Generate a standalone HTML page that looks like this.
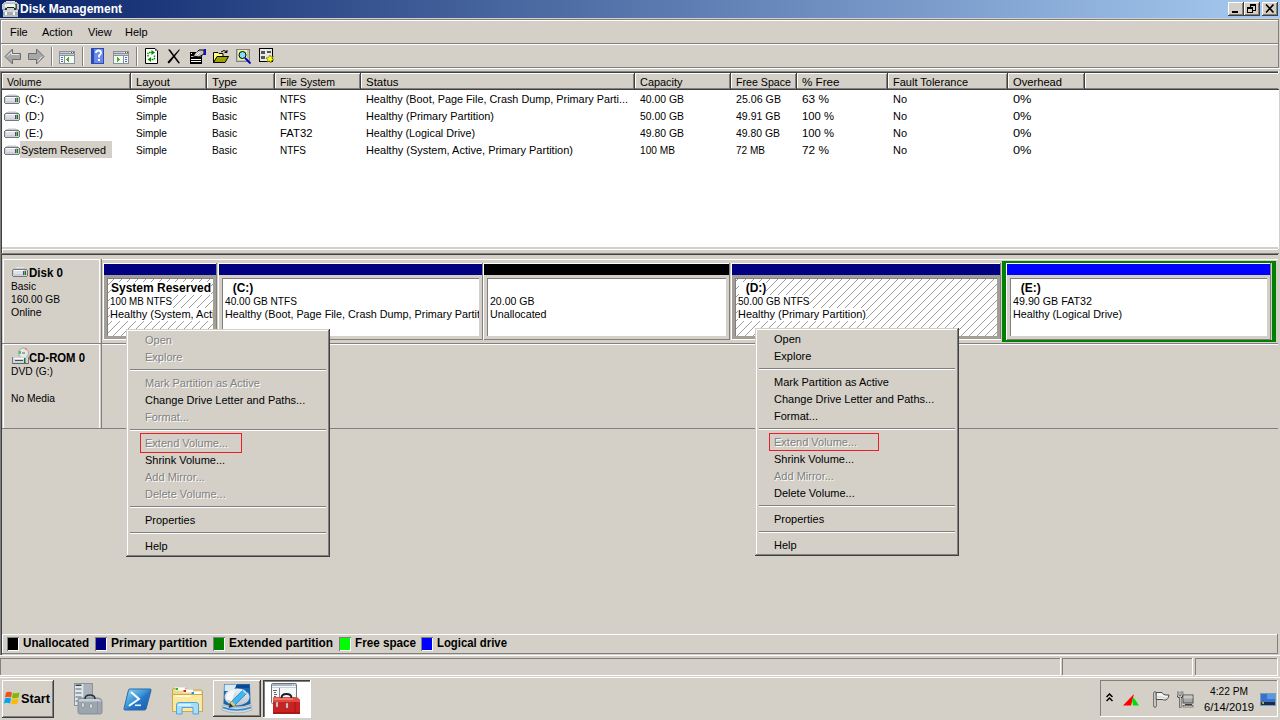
<!DOCTYPE html>
<html><head><meta charset="utf-8">
<style>
*{margin:0;padding:0;box-sizing:border-box}
html,body{width:1280px;height:720px;overflow:hidden;background:#d4d0c8;font-family:"Liberation Sans",sans-serif;font-size:11px;color:#000;position:relative}
.a{position:absolute}
.t{position:absolute;white-space:nowrap;line-height:13px;font-size:11px}
.b{font-weight:bold;font-size:12px}
.dis{color:#808080;text-shadow:1px 1px 0 #fff}
</style></head><body>
<div class="a" style="left:0px;top:0px;width:1280px;height:18px;background:linear-gradient(to right,#0a246a,#a6caf0);"></div>
<svg class="a" style="left:2px;top:1px" width="17" height="16" viewBox="0 0 17 16" shape-rendering="crispEdges">
<rect x="4" y="0" width="9" height="1" fill="#e0e2e4"/>
<rect x="2" y="1" width="13" height="2" fill="#c4c8cc"/>
<rect x="0" y="3" width="17" height="6" fill="#c8ccd0"/><rect x="1" y="2" width="15" height="1" fill="#b8bcc0"/>
<rect x="3" y="3" width="10" height="3" fill="#f0f2f6"/>
<rect x="13" y="3" width="2" height="5" fill="#504860"/><rect x="13" y="4" width="1" height="4" fill="#30e030"/>
<rect x="5" y="6" width="7" height="1" fill="#202020"/><rect x="3" y="7" width="2" height="2" fill="#303030"/><rect x="12" y="7" width="2" height="2" fill="#303030"/><rect x="0" y="8" width="3" height="1" fill="#8a8e92"/><rect x="14" y="8" width="3" height="1" fill="#8a8e92"/>
<rect x="1" y="9" width="15" height="7" fill="#a4acb0"/><rect x="1" y="9" width="15" height="2" fill="#d0d6d8"/><rect x="1" y="14" width="15" height="2" fill="#b4bcc0"/>
<rect x="3" y="11" width="2" height="3" fill="#f8f8f8"/><rect x="11" y="11" width="2" height="3" fill="#f8f8f8"/>
</svg>
<div class="t b" style="left:20px;top:3px;color:#fff">Disk Management</div>
<div class="a" style="left:1228px;top:2px;width:16px;height:14px;background:#d4d0c8;"></div>
<div class="a" style="left:1228px;top:2px;width:15px;height:1px;background:#fff;"></div>
<div class="a" style="left:1228px;top:2px;width:1px;height:13px;background:#fff;"></div>
<div class="a" style="left:1228px;top:15px;width:16px;height:1px;background:#404040;"></div>
<div class="a" style="left:1243px;top:2px;width:1px;height:14px;background:#404040;"></div>
<div class="a" style="left:1229px;top:14px;width:14px;height:1px;background:#808080;"></div>
<div class="a" style="left:1242px;top:3px;width:1px;height:12px;background:#808080;"></div>
<div class="a" style="left:1232px;top:11px;width:6px;height:2px;background:#000"></div>
<div class="a" style="left:1244px;top:2px;width:16px;height:14px;background:#d4d0c8;"></div>
<div class="a" style="left:1244px;top:2px;width:15px;height:1px;background:#fff;"></div>
<div class="a" style="left:1244px;top:2px;width:1px;height:13px;background:#fff;"></div>
<div class="a" style="left:1244px;top:15px;width:16px;height:1px;background:#404040;"></div>
<div class="a" style="left:1259px;top:2px;width:1px;height:14px;background:#404040;"></div>
<div class="a" style="left:1245px;top:14px;width:14px;height:1px;background:#808080;"></div>
<div class="a" style="left:1258px;top:3px;width:1px;height:12px;background:#808080;"></div>
<div class="a" style="left:1250px;top:4px;width:6px;height:7px;border:1px solid #000;border-top-width:2px"></div><div class="a" style="left:1247px;top:7px;width:6px;height:6px;border:1px solid #000;border-top-width:2px;background:#d4d0c8"></div>
<div class="a" style="left:1262px;top:2px;width:16px;height:14px;background:#d4d0c8;"></div>
<div class="a" style="left:1262px;top:2px;width:15px;height:1px;background:#fff;"></div>
<div class="a" style="left:1262px;top:2px;width:1px;height:13px;background:#fff;"></div>
<div class="a" style="left:1262px;top:15px;width:16px;height:1px;background:#404040;"></div>
<div class="a" style="left:1277px;top:2px;width:1px;height:14px;background:#404040;"></div>
<div class="a" style="left:1263px;top:14px;width:14px;height:1px;background:#808080;"></div>
<div class="a" style="left:1276px;top:3px;width:1px;height:12px;background:#808080;"></div>
<svg class="a" style="left:1265px;top:4px" width="10" height="9"><path d="M1 0.5L8.5 8.5M8.5 0.5L1 8.5" stroke="#000" stroke-width="1.6" fill="none"/></svg>
<div class="a" style="left:0px;top:18px;width:1280px;height:1px;background:#d4d0c8;"></div>
<div class="a" style="left:0px;top:19px;width:1279px;height:1px;background:#808080;"></div>
<div class="a" style="left:0px;top:19px;width:1px;height:25px;background:#808080;"></div>
<div class="a" style="left:1px;top:20px;width:1277px;height:1px;background:#fff;"></div>
<div class="a" style="left:1px;top:20px;width:1px;height:23px;background:#fff;"></div>
<div class="a" style="left:1278px;top:19px;width:1px;height:25px;background:#808080;"></div>
<div class="a" style="left:1px;top:43px;width:1278px;height:1px;background:#808080;"></div>
<div class="t " style="left:10px;top:26px;">File</div>
<div class="t " style="left:42px;top:26px;">Action</div>
<div class="t " style="left:88px;top:26px;">View</div>
<div class="t " style="left:125px;top:26px;">Help</div>
<div class="a" style="left:1px;top:44px;width:1277px;height:1px;background:#fff;"></div>
<div class="a" style="left:0px;top:44px;width:1px;height:24px;background:#808080;"></div>
<div class="a" style="left:1px;top:45px;width:1px;height:22px;background:#fff;"></div>
<div class="a" style="left:1278px;top:44px;width:1px;height:24px;background:#808080;"></div>
<div class="a" style="left:1px;top:67px;width:1278px;height:1px;background:#808080;"></div>
<div class="a" style="left:0px;top:68px;width:1280px;height:1px;background:#fff;"></div>
<div class="a" style="left:51px;top:47px;width:1px;height:19px;background:#808080;"></div>
<div class="a" style="left:52px;top:47px;width:1px;height:19px;background:#fff;"></div>
<div class="a" style="left:82px;top:47px;width:1px;height:19px;background:#808080;"></div>
<div class="a" style="left:83px;top:47px;width:1px;height:19px;background:#fff;"></div>
<div class="a" style="left:136px;top:47px;width:1px;height:19px;background:#808080;"></div>
<div class="a" style="left:137px;top:47px;width:1px;height:19px;background:#fff;"></div>
<div id="tb"></div>
<div class="a" style="left:0px;top:71px;width:1279px;height:1px;background:#808080;"></div>
<div class="a" style="left:0px;top:71px;width:1px;height:585px;background:#808080;"></div>
<div class="a" style="left:1px;top:72px;width:1277px;height:1px;background:#404040;"></div>
<div class="a" style="left:1px;top:72px;width:1px;height:583px;background:#404040;"></div>
<div class="a" style="left:2px;top:73px;width:1276px;height:174px;background:#fff;"></div>
<div class="a" style="left:1278px;top:71px;width:1px;height:178px;background:#fff;"></div>
<div class="a" style="left:2px;top:249px;width:1276px;height:1px;background:#fff;"></div>
<div class="a" style="left:2px;top:249px;width:1px;height:4px;background:#fff;"></div>
<div class="a" style="left:2px;top:73px;width:129px;height:17px;background:#d4d0c8;"></div>
<div class="a" style="left:2px;top:73px;width:128px;height:1px;background:#fff;"></div>
<div class="a" style="left:2px;top:73px;width:1px;height:16px;background:#fff;"></div>
<div class="a" style="left:129px;top:74px;width:1px;height:15px;background:#808080;"></div>
<div class="a" style="left:130px;top:73px;width:1px;height:17px;background:#404040;"></div>
<div class="a" style="left:2px;top:88px;width:128px;height:1px;background:#808080;"></div>
<div class="a" style="left:2px;top:89px;width:129px;height:1px;background:#404040;"></div>
<div class="t " style="left:7px;top:76px;transform:scaleX(0.9400);transform-origin:0 0;">Volume</div>
<div class="a" style="left:131px;top:73px;width:76px;height:17px;background:#d4d0c8;"></div>
<div class="a" style="left:131px;top:73px;width:75px;height:1px;background:#fff;"></div>
<div class="a" style="left:131px;top:73px;width:1px;height:16px;background:#fff;"></div>
<div class="a" style="left:205px;top:74px;width:1px;height:15px;background:#808080;"></div>
<div class="a" style="left:206px;top:73px;width:1px;height:17px;background:#404040;"></div>
<div class="a" style="left:131px;top:88px;width:75px;height:1px;background:#808080;"></div>
<div class="a" style="left:131px;top:89px;width:76px;height:1px;background:#404040;"></div>
<div class="t " style="left:136px;top:76px;transform:scaleX(1.0293);transform-origin:0 0;">Layout</div>
<div class="a" style="left:207px;top:73px;width:68px;height:17px;background:#d4d0c8;"></div>
<div class="a" style="left:207px;top:73px;width:67px;height:1px;background:#fff;"></div>
<div class="a" style="left:207px;top:73px;width:1px;height:16px;background:#fff;"></div>
<div class="a" style="left:273px;top:74px;width:1px;height:15px;background:#808080;"></div>
<div class="a" style="left:274px;top:73px;width:1px;height:17px;background:#404040;"></div>
<div class="a" style="left:207px;top:88px;width:67px;height:1px;background:#808080;"></div>
<div class="a" style="left:207px;top:89px;width:68px;height:1px;background:#404040;"></div>
<div class="t " style="left:212px;top:76px;transform:scaleX(1.0478);transform-origin:0 0;">Type</div>
<div class="a" style="left:275px;top:73px;width:86px;height:17px;background:#d4d0c8;"></div>
<div class="a" style="left:275px;top:73px;width:85px;height:1px;background:#fff;"></div>
<div class="a" style="left:275px;top:73px;width:1px;height:16px;background:#fff;"></div>
<div class="a" style="left:359px;top:74px;width:1px;height:15px;background:#808080;"></div>
<div class="a" style="left:360px;top:73px;width:1px;height:17px;background:#404040;"></div>
<div class="a" style="left:275px;top:88px;width:85px;height:1px;background:#808080;"></div>
<div class="a" style="left:275px;top:89px;width:86px;height:1px;background:#404040;"></div>
<div class="t " style="left:280px;top:76px;transform:scaleX(0.9570);transform-origin:0 0;">File System</div>
<div class="a" style="left:361px;top:73px;width:274px;height:17px;background:#d4d0c8;"></div>
<div class="a" style="left:361px;top:73px;width:273px;height:1px;background:#fff;"></div>
<div class="a" style="left:361px;top:73px;width:1px;height:16px;background:#fff;"></div>
<div class="a" style="left:633px;top:74px;width:1px;height:15px;background:#808080;"></div>
<div class="a" style="left:634px;top:73px;width:1px;height:17px;background:#404040;"></div>
<div class="a" style="left:361px;top:88px;width:273px;height:1px;background:#808080;"></div>
<div class="a" style="left:361px;top:89px;width:274px;height:1px;background:#404040;"></div>
<div class="t " style="left:366px;top:76px;transform:scaleX(1.0421);transform-origin:0 0;">Status</div>
<div class="a" style="left:635px;top:73px;width:96px;height:17px;background:#d4d0c8;"></div>
<div class="a" style="left:635px;top:73px;width:95px;height:1px;background:#fff;"></div>
<div class="a" style="left:635px;top:73px;width:1px;height:16px;background:#fff;"></div>
<div class="a" style="left:729px;top:74px;width:1px;height:15px;background:#808080;"></div>
<div class="a" style="left:730px;top:73px;width:1px;height:17px;background:#404040;"></div>
<div class="a" style="left:635px;top:88px;width:95px;height:1px;background:#808080;"></div>
<div class="a" style="left:635px;top:89px;width:96px;height:1px;background:#404040;"></div>
<div class="t " style="left:640px;top:76px;transform:scaleX(0.9931);transform-origin:0 0;">Capacity</div>
<div class="a" style="left:731px;top:73px;width:66px;height:17px;background:#d4d0c8;"></div>
<div class="a" style="left:731px;top:73px;width:65px;height:1px;background:#fff;"></div>
<div class="a" style="left:731px;top:73px;width:1px;height:16px;background:#fff;"></div>
<div class="a" style="left:795px;top:74px;width:1px;height:15px;background:#808080;"></div>
<div class="a" style="left:796px;top:73px;width:1px;height:17px;background:#404040;"></div>
<div class="a" style="left:731px;top:88px;width:65px;height:1px;background:#808080;"></div>
<div class="a" style="left:731px;top:89px;width:66px;height:1px;background:#404040;"></div>
<div class="t " style="left:736px;top:76px;transform:scaleX(0.9670);transform-origin:0 0;">Free Space</div>
<div class="a" style="left:797px;top:73px;width:91px;height:17px;background:#d4d0c8;"></div>
<div class="a" style="left:797px;top:73px;width:90px;height:1px;background:#fff;"></div>
<div class="a" style="left:797px;top:73px;width:1px;height:16px;background:#fff;"></div>
<div class="a" style="left:886px;top:74px;width:1px;height:15px;background:#808080;"></div>
<div class="a" style="left:887px;top:73px;width:1px;height:17px;background:#404040;"></div>
<div class="a" style="left:797px;top:88px;width:90px;height:1px;background:#808080;"></div>
<div class="a" style="left:797px;top:89px;width:91px;height:1px;background:#404040;"></div>
<div class="t " style="left:802px;top:76px;transform:scaleX(1.0573);transform-origin:0 0;">% Free</div>
<div class="a" style="left:888px;top:73px;width:120px;height:17px;background:#d4d0c8;"></div>
<div class="a" style="left:888px;top:73px;width:119px;height:1px;background:#fff;"></div>
<div class="a" style="left:888px;top:73px;width:1px;height:16px;background:#fff;"></div>
<div class="a" style="left:1006px;top:74px;width:1px;height:15px;background:#808080;"></div>
<div class="a" style="left:1007px;top:73px;width:1px;height:17px;background:#404040;"></div>
<div class="a" style="left:888px;top:88px;width:119px;height:1px;background:#808080;"></div>
<div class="a" style="left:888px;top:89px;width:120px;height:1px;background:#404040;"></div>
<div class="t " style="left:893px;top:76px;transform:scaleX(0.9998);transform-origin:0 0;">Fault Tolerance</div>
<div class="a" style="left:1008px;top:73px;width:77px;height:17px;background:#d4d0c8;"></div>
<div class="a" style="left:1008px;top:73px;width:76px;height:1px;background:#fff;"></div>
<div class="a" style="left:1008px;top:73px;width:1px;height:16px;background:#fff;"></div>
<div class="a" style="left:1083px;top:74px;width:1px;height:15px;background:#808080;"></div>
<div class="a" style="left:1084px;top:73px;width:1px;height:17px;background:#404040;"></div>
<div class="a" style="left:1008px;top:88px;width:76px;height:1px;background:#808080;"></div>
<div class="a" style="left:1008px;top:89px;width:77px;height:1px;background:#404040;"></div>
<div class="t " style="left:1013px;top:76px;transform:scaleX(1.0142);transform-origin:0 0;">Overhead</div>
<div class="a" style="left:1085px;top:73px;width:194px;height:17px;background:#d4d0c8;"></div>
<div class="a" style="left:1085px;top:73px;width:193px;height:1px;background:#fff;"></div>
<div class="a" style="left:1085px;top:73px;width:1px;height:16px;background:#fff;"></div>
<div class="a" style="left:1085px;top:88px;width:193px;height:1px;background:#808080;"></div>
<div class="a" style="left:1085px;top:89px;width:194px;height:1px;background:#404040;"></div>
<div class="a" style="left:20px;top:141px;width:92px;height:17px;background:#d4d0c8;"></div>
<svg class="a" style="left:4px;top:94px" width="16" height="10" viewBox="0 0 16 10" shape-rendering="crispEdges"><rect x="4" y="0" width="8" height="1" fill="#e2e4e6"/><rect x="2" y="1" width="12" height="1" fill="#c4c6ca"/><rect x="0" y="3" width="16" height="6" fill="#74787e"/><rect x="1" y="2" width="14" height="8" fill="#74787e"/><rect x="1" y="3" width="14" height="6" fill="#cdd1d7"/><rect x="2" y="3" width="10" height="1" fill="#ffffff"/><rect x="2" y="4" width="9" height="3" fill="#dde2ea"/><rect x="11" y="4" width="3" height="4" fill="#5a4a6a"/><rect x="12" y="4" width="1" height="4" fill="#30e030"/></svg>
<div class="t " style="left:25px;top:93px;transform:scaleX(1.0367);transform-origin:0 0;">(C:)</div>
<div class="t " style="left:136px;top:93px;transform:scaleX(0.9219);transform-origin:0 0;">Simple</div>
<div class="t " style="left:212px;top:93px;transform:scaleX(0.9292);transform-origin:0 0;">Basic</div>
<div class="t " style="left:280px;top:93px;transform:scaleX(0.9048);transform-origin:0 0;">NTFS</div>
<div class="t " style="left:366px;top:93px;transform:scaleX(0.9852);transform-origin:0 0;">Healthy (Boot, Page File, Crash Dump, Primary Parti...</div>
<div class="t " style="left:640px;top:93px;transform:scaleX(0.9466);transform-origin:0 0;">40.00 GB</div>
<div class="t " style="left:736px;top:93px;transform:scaleX(0.9681);transform-origin:0 0;">25.06 GB</div>
<div class="t " style="left:802px;top:93px;transform:scaleX(1.0766);transform-origin:0 0;">63 %</div>
<div class="t " style="left:893px;top:93px;transform:scaleX(0.9956);transform-origin:0 0;">No</div>
<div class="t " style="left:1013px;top:93px;transform:scaleX(1.1631);transform-origin:0 0;">0%</div>
<svg class="a" style="left:4px;top:111px" width="16" height="10" viewBox="0 0 16 10" shape-rendering="crispEdges"><rect x="4" y="0" width="8" height="1" fill="#e2e4e6"/><rect x="2" y="1" width="12" height="1" fill="#c4c6ca"/><rect x="0" y="3" width="16" height="6" fill="#74787e"/><rect x="1" y="2" width="14" height="8" fill="#74787e"/><rect x="1" y="3" width="14" height="6" fill="#cdd1d7"/><rect x="2" y="3" width="10" height="1" fill="#ffffff"/><rect x="2" y="4" width="9" height="3" fill="#dde2ea"/><rect x="11" y="4" width="3" height="4" fill="#5a4a6a"/><rect x="12" y="4" width="1" height="4" fill="#30e030"/></svg>
<div class="t " style="left:25px;top:110px;transform:scaleX(1.0367);transform-origin:0 0;">(D:)</div>
<div class="t " style="left:136px;top:110px;transform:scaleX(0.9219);transform-origin:0 0;">Simple</div>
<div class="t " style="left:212px;top:110px;transform:scaleX(0.9292);transform-origin:0 0;">Basic</div>
<div class="t " style="left:280px;top:110px;transform:scaleX(0.9048);transform-origin:0 0;">NTFS</div>
<div class="t " style="left:366px;top:110px;transform:scaleX(0.9924);transform-origin:0 0;">Healthy (Primary Partition)</div>
<div class="t " style="left:640px;top:110px;transform:scaleX(0.9466);transform-origin:0 0;">50.00 GB</div>
<div class="t " style="left:736px;top:110px;transform:scaleX(0.9573);transform-origin:0 0;">49.91 GB</div>
<div class="t " style="left:802px;top:110px;transform:scaleX(1.0255);transform-origin:0 0;">100 %</div>
<div class="t " style="left:893px;top:110px;transform:scaleX(0.9956);transform-origin:0 0;">No</div>
<div class="t " style="left:1013px;top:110px;transform:scaleX(1.1631);transform-origin:0 0;">0%</div>
<svg class="a" style="left:4px;top:128px" width="16" height="10" viewBox="0 0 16 10" shape-rendering="crispEdges"><rect x="4" y="0" width="8" height="1" fill="#e2e4e6"/><rect x="2" y="1" width="12" height="1" fill="#c4c6ca"/><rect x="0" y="3" width="16" height="6" fill="#74787e"/><rect x="1" y="2" width="14" height="8" fill="#74787e"/><rect x="1" y="3" width="14" height="6" fill="#cdd1d7"/><rect x="2" y="3" width="10" height="1" fill="#ffffff"/><rect x="2" y="4" width="9" height="3" fill="#dde2ea"/><rect x="11" y="4" width="3" height="4" fill="#5a4a6a"/><rect x="12" y="4" width="1" height="4" fill="#30e030"/></svg>
<div class="t " style="left:25px;top:127px;transform:scaleX(1.0150);transform-origin:0 0;">(E:)</div>
<div class="t " style="left:136px;top:127px;transform:scaleX(0.9219);transform-origin:0 0;">Simple</div>
<div class="t " style="left:212px;top:127px;transform:scaleX(0.9292);transform-origin:0 0;">Basic</div>
<div class="t " style="left:280px;top:127px;transform:scaleX(1.0287);transform-origin:0 0;">FAT32</div>
<div class="t " style="left:366px;top:127px;transform:scaleX(0.9796);transform-origin:0 0;">Healthy (Logical Drive)</div>
<div class="t " style="left:640px;top:127px;transform:scaleX(0.9466);transform-origin:0 0;">49.80 GB</div>
<div class="t " style="left:736px;top:127px;transform:scaleX(0.9466);transform-origin:0 0;">49.80 GB</div>
<div class="t " style="left:802px;top:127px;transform:scaleX(1.0255);transform-origin:0 0;">100 %</div>
<div class="t " style="left:893px;top:127px;transform:scaleX(0.9956);transform-origin:0 0;">No</div>
<div class="t " style="left:1013px;top:127px;transform:scaleX(1.1631);transform-origin:0 0;">0%</div>
<svg class="a" style="left:4px;top:145px" width="16" height="10" viewBox="0 0 16 10" shape-rendering="crispEdges"><rect x="4" y="0" width="8" height="1" fill="#e2e4e6"/><rect x="2" y="1" width="12" height="1" fill="#c4c6ca"/><rect x="0" y="3" width="16" height="6" fill="#74787e"/><rect x="1" y="2" width="14" height="8" fill="#74787e"/><rect x="1" y="3" width="14" height="6" fill="#cdd1d7"/><rect x="2" y="3" width="10" height="1" fill="#ffffff"/><rect x="2" y="4" width="9" height="3" fill="#dde2ea"/><rect x="11" y="4" width="3" height="4" fill="#5a4a6a"/><rect x="12" y="4" width="1" height="4" fill="#30e030"/></svg>
<div class="t " style="left:21px;top:144px;transform:scaleX(0.9791);transform-origin:0 0;">System Reserved</div>
<div class="t " style="left:136px;top:144px;transform:scaleX(0.9219);transform-origin:0 0;">Simple</div>
<div class="t " style="left:212px;top:144px;transform:scaleX(0.9292);transform-origin:0 0;">Basic</div>
<div class="t " style="left:280px;top:144px;transform:scaleX(0.9048);transform-origin:0 0;">NTFS</div>
<div class="t " style="left:366px;top:144px;transform:scaleX(0.9989);transform-origin:0 0;">Healthy (System, Active, Primary Partition)</div>
<div class="t " style="left:640px;top:144px;transform:scaleX(0.9230);transform-origin:0 0;">100 MB</div>
<div class="t " style="left:736px;top:144px;transform:scaleX(0.9120);transform-origin:0 0;">72 MB</div>
<div class="t " style="left:802px;top:144px;transform:scaleX(1.0766);transform-origin:0 0;">72 %</div>
<div class="t " style="left:893px;top:144px;transform:scaleX(0.9956);transform-origin:0 0;">No</div>
<div class="t " style="left:1013px;top:144px;transform:scaleX(1.1631);transform-origin:0 0;">0%</div>
<div class="a" style="left:1px;top:253px;width:1278px;height:1px;background:#808080;"></div>
<div class="a" style="left:1px;top:254px;width:1277px;height:1px;background:#404040;"></div>
<div class="a" style="left:3px;top:259px;width:96px;height:1px;background:#fff;"></div>
<div class="a" style="left:3px;top:259px;width:1px;height:84px;background:#fff;"></div>
<div class="a" style="left:99px;top:259px;width:1px;height:84px;background:#fff;"></div>
<div class="a" style="left:101px;top:259px;width:1px;height:84px;background:#808080;"></div>
<div class="a" style="left:102px;top:259px;width:1176px;height:1px;background:#fff;"></div>
<div class="a" style="left:2px;top:343px;width:1276px;height:1px;background:#808080;"></div>
<div class="a" style="left:3px;top:344px;width:96px;height:1px;background:#fff;"></div>
<div class="a" style="left:3px;top:344px;width:1px;height:84px;background:#fff;"></div>
<div class="a" style="left:99px;top:344px;width:1px;height:84px;background:#fff;"></div>
<div class="a" style="left:101px;top:344px;width:1px;height:84px;background:#808080;"></div>
<div class="a" style="left:102px;top:344px;width:1176px;height:1px;background:#fff;"></div>
<div class="a" style="left:2px;top:428px;width:1276px;height:1px;background:#808080;"></div>
<svg class="a" style="left:12px;top:267px" width="16" height="10" viewBox="0 0 16 10" shape-rendering="crispEdges"><rect x="4" y="0" width="8" height="1" fill="#e2e4e6"/><rect x="2" y="1" width="12" height="1" fill="#c4c6ca"/><rect x="0" y="3" width="16" height="6" fill="#74787e"/><rect x="1" y="2" width="14" height="8" fill="#74787e"/><rect x="1" y="3" width="14" height="6" fill="#cdd1d7"/><rect x="2" y="3" width="10" height="1" fill="#ffffff"/><rect x="2" y="4" width="9" height="3" fill="#dde2ea"/><rect x="11" y="4" width="3" height="4" fill="#5a4a6a"/><rect x="12" y="4" width="1" height="4" fill="#30e030"/></svg>
<div class="t b" style="left:29px;top:267px;transform:scaleX(0.9616);transform-origin:0 0;">Disk 0</div>
<div class="t " style="left:11px;top:280px;transform:scaleX(0.9292);transform-origin:0 0;">Basic</div>
<div class="t " style="left:11px;top:293px;transform:scaleX(0.9317);transform-origin:0 0;">160.00 GB</div>
<div class="t " style="left:11px;top:306px;transform:scaleX(0.9592);transform-origin:0 0;">Online</div>
<svg class="a" style="left:12px;top:347px" width="17" height="18" viewBox="0 0 17 18" shape-rendering="crispEdges"><circle cx="11.5" cy="6" r="5" fill="#e4e8ea" stroke="#a0a6aa" shape-rendering="auto"/><rect x="7" y="4" width="2" height="3" fill="#40d040"/><rect x="13" y="1" width="2" height="2" fill="#ff8080"/><rect x="10" y="5" width="3" height="2" fill="#9aa"/><rect x="0" y="10" width="17" height="7" fill="#787c82"/><rect x="1" y="10" width="15" height="6" fill="#d0d4da"/><rect x="2" y="11" width="12" height="1" fill="#fff"/><rect x="3" y="13" width="8" height="1" fill="#505050"/><rect x="12" y="11" width="2" height="5" fill="#5a4a6a"/><rect x="12.5" y="11" width="1" height="5" fill="#30e030"/><rect x="1" y="16" width="15" height="1" fill="#606468"/></svg>
<div class="t b" style="left:29px;top:352px;transform:scaleX(0.9437);transform-origin:0 0;">CD-ROM 0</div>
<div class="t " style="left:11px;top:365px;transform:scaleX(0.9285);transform-origin:0 0;">DVD (G:)</div>
<div class="t " style="left:11px;top:392px;transform:scaleX(0.9346);transform-origin:0 0;">No Media</div>
<div class="a" style="left:103px;top:263px;width:113px;height:1px;background:#fff;"></div>
<div class="a" style="left:103px;top:263px;width:1px;height:77px;background:#fff;"></div>
<div class="a" style="left:104px;top:264px;width:112px;height:11px;background:#000080;"></div>
<div class="a" style="left:216px;top:263px;width:1px;height:77px;background:#808080;"></div>
<div class="a" style="left:104px;top:339px;width:113px;height:1px;background:#808080;"></div>
<div class="a" style="left:104px;top:275px;width:112px;height:64px;background:#a39f97;"></div>
<div class="a" style="left:107px;top:278px;width:106px;height:58px;background:#808080;"></div>
<div class="a" style="left:108px;top:279px;width:105px;height:57px;background:#fff;"></div>
<svg class="a" style="left:108px;top:279px" width="105" height="57" shape-rendering="crispEdges"><defs><pattern id="h104" patternUnits="userSpaceOnUse" width="8" height="8"><rect x="0" y="5" width="1" height="1" fill="#9c9c9c"/><rect x="1" y="4" width="1" height="1" fill="#9c9c9c"/><rect x="2" y="3" width="1" height="1" fill="#9c9c9c"/><rect x="3" y="2" width="1" height="1" fill="#9c9c9c"/><rect x="4" y="1" width="1" height="1" fill="#9c9c9c"/><rect x="5" y="0" width="1" height="1" fill="#9c9c9c"/><rect x="6" y="7" width="1" height="1" fill="#9c9c9c"/><rect x="7" y="6" width="1" height="1" fill="#9c9c9c"/></pattern></defs><rect width="105" height="57" fill="url(#h104)"/></svg>
<div class="a" style="left:104px;top:339px;width:113px;height:1px;background:#fff;"></div>
<div class="a" style="left:111px;top:282px;width:102px;height:13px;overflow:hidden">
<div class="t b" style="left:0px;top:0px;background:#fff">System Reserved</div>
</div>
<div class="a" style="left:110px;top:295px;width:103px;height:13px;overflow:hidden">
<div class="t " style="left:0px;top:0px;transform:scaleX(0.8897);transform-origin:0 0;background:#fff">100 MB NTFS</div>
</div>
<div class="a" style="left:110px;top:308px;width:103px;height:13px;overflow:hidden">
<div class="t " style="left:0px;top:0px;transform:scaleX(0.9989);transform-origin:0 0;background:#fff">Healthy (System, Active, Primary Partition)</div>
</div>
<div class="a" style="left:218px;top:263px;width:264px;height:1px;background:#fff;"></div>
<div class="a" style="left:218px;top:263px;width:1px;height:77px;background:#fff;"></div>
<div class="a" style="left:219px;top:264px;width:263px;height:11px;background:#000080;"></div>
<div class="a" style="left:482px;top:263px;width:1px;height:77px;background:#808080;"></div>
<div class="a" style="left:219px;top:339px;width:264px;height:1px;background:#808080;"></div>
<div class="a" style="left:219px;top:275px;width:263px;height:64px;background:#d4d0c8;"></div>
<div class="a" style="left:222px;top:278px;width:257px;height:58px;background:#808080;"></div>
<div class="a" style="left:223px;top:279px;width:256px;height:57px;background:#fff;"></div>
<div class="a" style="left:226px;top:282px;width:253px;height:13px;overflow:hidden">
<div class="t b" style="left:0px;top:0px;background:#fff">&nbsp;&nbsp;(C:)</div>
</div>
<div class="a" style="left:225px;top:295px;width:254px;height:13px;overflow:hidden">
<div class="t " style="left:0px;top:0px;transform:scaleX(0.9199);transform-origin:0 0;background:#fff">40.00 GB NTFS</div>
</div>
<div class="a" style="left:225px;top:308px;width:254px;height:13px;overflow:hidden">
<div class="t " style="left:0px;top:0px;transform:scaleX(0.9815);transform-origin:0 0;background:#fff">Healthy (Boot, Page File, Crash Dump, Primary Partition)</div>
</div>
<div class="a" style="left:483px;top:263px;width:246px;height:1px;background:#fff;"></div>
<div class="a" style="left:483px;top:263px;width:1px;height:77px;background:#fff;"></div>
<div class="a" style="left:484px;top:264px;width:245px;height:11px;background:#000000;"></div>
<div class="a" style="left:729px;top:263px;width:1px;height:77px;background:#808080;"></div>
<div class="a" style="left:484px;top:339px;width:246px;height:1px;background:#808080;"></div>
<div class="a" style="left:484px;top:275px;width:245px;height:64px;background:#d4d0c8;"></div>
<div class="a" style="left:487px;top:278px;width:239px;height:58px;background:#808080;"></div>
<div class="a" style="left:488px;top:279px;width:238px;height:57px;background:#fff;"></div>
<div class="a" style="left:490px;top:295px;width:236px;height:13px;overflow:hidden">
<div class="t " style="left:0px;top:0px;transform:scaleX(0.9573);transform-origin:0 0;background:#fff">20.00 GB</div>
</div>
<div class="a" style="left:490px;top:308px;width:236px;height:13px;overflow:hidden">
<div class="t " style="left:0px;top:0px;transform:scaleX(0.9726);transform-origin:0 0;background:#fff">Unallocated</div>
</div>
<div class="a" style="left:731px;top:263px;width:269px;height:1px;background:#fff;"></div>
<div class="a" style="left:731px;top:263px;width:1px;height:77px;background:#fff;"></div>
<div class="a" style="left:732px;top:264px;width:268px;height:11px;background:#000080;"></div>
<div class="a" style="left:1000px;top:263px;width:1px;height:77px;background:#808080;"></div>
<div class="a" style="left:732px;top:339px;width:269px;height:1px;background:#808080;"></div>
<div class="a" style="left:732px;top:275px;width:268px;height:64px;background:#a39f97;"></div>
<div class="a" style="left:735px;top:278px;width:262px;height:58px;background:#808080;"></div>
<div class="a" style="left:736px;top:279px;width:261px;height:57px;background:#fff;"></div>
<svg class="a" style="left:736px;top:279px" width="261" height="57" shape-rendering="crispEdges"><defs><pattern id="h732" patternUnits="userSpaceOnUse" width="8" height="8"><rect x="0" y="1" width="1" height="1" fill="#9c9c9c"/><rect x="1" y="0" width="1" height="1" fill="#9c9c9c"/><rect x="2" y="7" width="1" height="1" fill="#9c9c9c"/><rect x="3" y="6" width="1" height="1" fill="#9c9c9c"/><rect x="4" y="5" width="1" height="1" fill="#9c9c9c"/><rect x="5" y="4" width="1" height="1" fill="#9c9c9c"/><rect x="6" y="3" width="1" height="1" fill="#9c9c9c"/><rect x="7" y="2" width="1" height="1" fill="#9c9c9c"/></pattern></defs><rect width="261" height="57" fill="url(#h732)"/></svg>
<div class="a" style="left:732px;top:339px;width:269px;height:1px;background:#fff;"></div>
<div class="a" style="left:739px;top:282px;width:258px;height:13px;overflow:hidden">
<div class="t b" style="left:0px;top:0px;background:#fff">&nbsp;&nbsp;(D:)</div>
</div>
<div class="a" style="left:738px;top:295px;width:259px;height:13px;overflow:hidden">
<div class="t " style="left:0px;top:0px;transform:scaleX(0.9136);transform-origin:0 0;background:#fff">50.00 GB NTFS</div>
</div>
<div class="a" style="left:738px;top:308px;width:259px;height:13px;overflow:hidden">
<div class="t " style="left:0px;top:0px;transform:scaleX(0.9924);transform-origin:0 0;background:#fff">Healthy (Primary Partition)</div>
</div>
<div class="a" style="left:1002px;top:261px;width:274px;height:2px;background:#008000;"></div>
<div class="a" style="left:1002px;top:340px;width:274px;height:2px;background:#008000;"></div>
<div class="a" style="left:1002px;top:261px;width:4px;height:81px;background:#008000;"></div>
<div class="a" style="left:1272px;top:261px;width:4px;height:81px;background:#008000;"></div>
<div class="a" style="left:1006px;top:263px;width:264px;height:1px;background:#fff;"></div>
<div class="a" style="left:1006px;top:263px;width:1px;height:77px;background:#fff;"></div>
<div class="a" style="left:1007px;top:264px;width:263px;height:11px;background:#0000ff;"></div>
<div class="a" style="left:1270px;top:263px;width:1px;height:77px;background:#808080;"></div>
<div class="a" style="left:1007px;top:339px;width:264px;height:1px;background:#808080;"></div>
<div class="a" style="left:1007px;top:275px;width:263px;height:64px;background:#d4d0c8;"></div>
<div class="a" style="left:1010px;top:278px;width:257px;height:58px;background:#808080;"></div>
<div class="a" style="left:1011px;top:279px;width:256px;height:57px;background:#fff;"></div>
<div class="a" style="left:1014px;top:282px;width:253px;height:13px;overflow:hidden">
<div class="t b" style="left:0px;top:0px;background:#fff">&nbsp;&nbsp;(E:)</div>
</div>
<div class="a" style="left:1013px;top:295px;width:254px;height:13px;overflow:hidden">
<div class="t " style="left:0px;top:0px;transform:scaleX(0.9738);transform-origin:0 0;background:#fff">49.90 GB FAT32</div>
</div>
<div class="a" style="left:1013px;top:308px;width:254px;height:13px;overflow:hidden">
<div class="t " style="left:0px;top:0px;transform:scaleX(0.9796);transform-origin:0 0;background:#fff">Healthy (Logical Drive)</div>
</div>
<div class="a" style="left:2px;top:634px;width:1276px;height:1px;background:#fff;"></div>
<div class="a" style="left:2px;top:634px;width:1px;height:20px;background:#fff;"></div>
<div class="a" style="left:1277px;top:634px;width:1px;height:20px;background:#808080;"></div>
<div class="a" style="left:2px;top:653px;width:1276px;height:1px;background:#808080;"></div>
<div class="a" style="left:7px;top:637px;width:12px;height:14px;background:#808080;"></div>
<div class="a" style="left:8px;top:638px;width:11px;height:13px;background:#fff;"></div>
<div class="a" style="left:8px;top:638px;width:10px;height:12px;background:#000000;"></div>
<div class="t b" style="left:23px;top:637px;transform:scaleX(0.9704);transform-origin:0 0;">Unallocated</div>
<div class="a" style="left:95px;top:637px;width:12px;height:14px;background:#808080;"></div>
<div class="a" style="left:96px;top:638px;width:11px;height:13px;background:#fff;"></div>
<div class="a" style="left:96px;top:638px;width:10px;height:12px;background:#000080;"></div>
<div class="t b" style="left:111px;top:637px;transform:scaleX(0.9997);transform-origin:0 0;">Primary partition</div>
<div class="a" style="left:213px;top:637px;width:12px;height:14px;background:#808080;"></div>
<div class="a" style="left:214px;top:638px;width:11px;height:13px;background:#fff;"></div>
<div class="a" style="left:214px;top:638px;width:10px;height:12px;background:#008000;"></div>
<div class="t b" style="left:229px;top:637px;transform:scaleX(0.9872);transform-origin:0 0;">Extended partition</div>
<div class="a" style="left:339px;top:637px;width:12px;height:14px;background:#808080;"></div>
<div class="a" style="left:340px;top:638px;width:11px;height:13px;background:#fff;"></div>
<div class="a" style="left:340px;top:638px;width:10px;height:12px;background:#00ff00;"></div>
<div class="t b" style="left:355px;top:637px;transform:scaleX(0.9726);transform-origin:0 0;">Free space</div>
<div class="a" style="left:421px;top:637px;width:12px;height:14px;background:#808080;"></div>
<div class="a" style="left:422px;top:638px;width:11px;height:13px;background:#fff;"></div>
<div class="a" style="left:422px;top:638px;width:10px;height:12px;background:#0000ff;"></div>
<div class="t b" style="left:437px;top:637px;transform:scaleX(0.9455);transform-origin:0 0;">Logical drive</div>
<div class="a" style="left:0px;top:655px;width:1280px;height:1px;background:#fff;"></div>
<div class="a" style="left:0px;top:658px;width:1061px;height:1px;background:#808080;"></div>
<div class="a" style="left:0px;top:658px;width:1px;height:17px;background:#808080;"></div>
<div class="a" style="left:0px;top:675px;width:1061px;height:1px;background:#fff;"></div>
<div class="a" style="left:1060px;top:658px;width:1px;height:18px;background:#fff;"></div>
<div class="a" style="left:1062px;top:658px;width:131px;height:1px;background:#808080;"></div>
<div class="a" style="left:1062px;top:658px;width:1px;height:17px;background:#808080;"></div>
<div class="a" style="left:1062px;top:675px;width:131px;height:1px;background:#fff;"></div>
<div class="a" style="left:1192px;top:658px;width:1px;height:18px;background:#fff;"></div>
<div class="a" style="left:1195px;top:658px;width:83px;height:1px;background:#808080;"></div>
<div class="a" style="left:1195px;top:658px;width:1px;height:17px;background:#808080;"></div>
<div class="a" style="left:1195px;top:675px;width:83px;height:1px;background:#fff;"></div>
<div class="a" style="left:1277px;top:658px;width:1px;height:18px;background:#fff;"></div>
<div class="a" style="left:0px;top:677px;width:1280px;height:1px;background:#fff;"></div>
<div class="a" style="left:2px;top:680px;width:52px;height:38px;background:#d4d0c8;"></div>
<div class="a" style="left:2px;top:680px;width:51px;height:1px;background:#fff;"></div>
<div class="a" style="left:2px;top:680px;width:1px;height:37px;background:#fff;"></div>
<div class="a" style="left:2px;top:717px;width:52px;height:1px;background:#404040;"></div>
<div class="a" style="left:53px;top:680px;width:1px;height:38px;background:#404040;"></div>
<div class="a" style="left:3px;top:716px;width:50px;height:1px;background:#808080;"></div>
<div class="a" style="left:52px;top:681px;width:1px;height:36px;background:#808080;"></div>
<svg class="a" style="left:4px;top:690px" width="17" height="16" viewBox="0 0 17 16"><path d="M2 2.5 Q5 1 8 2.5 L7 7.5 Q4 6 1 7.5Z" fill="#f24f1c"/><path d="M9 2.8 Q12 4 15.5 2.5 L14.5 7.5 Q11 9 8 7.8Z" fill="#7fba00"/><path d="M1 8.5 Q4 7 7 8.5 L6 13.5 Q3 12 0 13.5Z" fill="#00a4ef"/><path d="M8 8.8 Q11 10 14.5 8.5 L13.5 13.5 Q10 15 7 13.8Z" fill="#ffb900"/></svg>
<div class="t b" style="left:21px;top:693px;transform:scaleX(1.0606);transform-origin:0 0;">Start</div>
<svg class="a" style="left:74px;top:683px" width="29" height="32" viewBox="0 0 29 32"><rect x="0.5" y="0.5" width="18" height="22" fill="#b8c0c8" stroke="#8a949c"/><rect x="1" y="1" width="8" height="21" fill="#dfe6ec"/><rect x="1.5" y="1.5" width="6" height="1.5" fill="#3a3e48"/><rect x="1.5" y="5" width="6" height="2" fill="#9aa6b0"/><rect x="1.5" y="9" width="6" height="2" fill="#9aa6b0"/><rect x="1.5" y="13" width="6" height="2" fill="#9aa6b0"/><rect x="1.5" y="17" width="6" height="2" fill="#9aa6b0"/><rect x="10" y="1" width="8" height="21" fill="#aab2ba"/><path d="M4 17 Q4 15 6 15 H24 Q27 15 28 18 V29 Q28 31 26 31 H6 Q4 31 4 29Z" fill="#9ca6ae" stroke="#7a848c" stroke-width="0.8"/><path d="M4.5 18.5 Q4.5 16 7 16 H24 Q26.5 16 27.5 18.5Z" fill="#c8d0d6"/><rect x="23" y="18" width="1" height="12" fill="#8a949c"/><path d="M11 16 Q11 12 16 12 Q21 12 21 16" stroke="#2a2e3a" stroke-width="1.6" fill="none"/><rect x="8" y="20" width="2" height="4" rx="0.5" fill="#f4f4f4" stroke="#666" stroke-width="0.4"/><rect x="16" y="21" width="2" height="4" rx="0.5" fill="#f4f4f4" stroke="#666" stroke-width="0.4"/></svg>
<svg class="a" style="left:123px;top:688px" width="29" height="23" viewBox="0 0 29 23"><defs><linearGradient id="psg" x1="0" y1="0" x2="1" y2="1"><stop offset="0" stop-color="#9ad8f4"/><stop offset="0.45" stop-color="#3a98d8"/><stop offset="0.55" stop-color="#2a78c8"/><stop offset="1" stop-color="#1a5aa8"/></linearGradient></defs><path d="M6.5 1 H27 Q28.5 1 28 2.5 L23 21 Q22.6 22 21.5 22 H2 Q0.6 22 1 20.5 L5.5 2 Q5.8 1 6.5 1Z" fill="url(#psg)" stroke="#2a6aa8" stroke-width="1"/><path d="M8.5 4.5 L16 11 L6.5 17.5" stroke="#fff" stroke-width="2" fill="none" stroke-linecap="round"/><rect x="12" y="16.5" width="6" height="1.6" fill="#e8f4fc"/></svg>
<svg class="a" style="left:171px;top:686px" width="33" height="29" viewBox="0 0 33 29"><path d="M1.5 4 Q1.5 2.5 3 2.5 H15 L16 4 H30 Q31.5 4 31.5 5.5 V25.5 H1.5Z" fill="#f0d888" stroke="#c8a850"/><rect x="4" y="1.5" width="10" height="3" fill="#fff"/><rect x="4.5" y="2" width="2.5" height="2" fill="#20c020"/><rect x="12" y="3.5" width="10" height="3" fill="#fff"/><rect x="12.5" y="4" width="2.5" height="2" fill="#d02020"/><rect x="20" y="5.5" width="10" height="3" fill="#fff"/><rect x="20.5" y="6" width="2.5" height="2" fill="#2090e0"/><path d="M1.5 8.5 H31.5 V25.5 H1.5Z" fill="#fae8a0" stroke="#c8a850"/><path d="M4 10 H20" stroke="#fff8d0" stroke-width="2"/><path d="M5.5 28 V19 Q5.5 16.5 8 16.5 H25 Q27.5 16.5 27.5 19 V28 H22 V21.5 H11 V28 Z" fill="#a8dcf8" stroke="#4aa8e0"/><path d="M7 19 H20" stroke="#e8f8ff" stroke-width="1.5"/></svg>
<div class="a" style="left:213px;top:680px;width:48px;height:37px;background:#d4d0c8;"></div>
<div class="a" style="left:213px;top:680px;width:47px;height:1px;background:#fff;"></div>
<div class="a" style="left:213px;top:680px;width:1px;height:36px;background:#fff;"></div>
<div class="a" style="left:213px;top:716px;width:48px;height:1px;background:#404040;"></div>
<div class="a" style="left:260px;top:680px;width:1px;height:37px;background:#404040;"></div>
<div class="a" style="left:214px;top:715px;width:46px;height:1px;background:#808080;"></div>
<div class="a" style="left:259px;top:681px;width:1px;height:35px;background:#808080;"></div>
<svg class="a" style="left:221px;top:683px" width="32" height="32" viewBox="0 0 32 32"><defs><linearGradient id="wzb" x1="0" y1="0" x2="0" y2="1"><stop offset="0" stop-color="#e8f0f6"/><stop offset="1" stop-color="#b8c4cc"/></linearGradient></defs><path d="M3 1 H29 L29.5 21 Q16 26 2.5 21 Z" fill="#1e64a8"/><path d="M3.5 1.5 H16 L12 8 H3.5Z" fill="#dceaf4"/><rect x="15" y="2" width="13" height="3" fill="#0c4a92"/><ellipse cx="16" cy="14" rx="12.5" ry="8.5" fill="url(#wzb)"/><path d="M5 16.5 Q4 9 14 6.5 L11 18Z" fill="#fafafa"/><path d="M1.5 22 Q16 27 30.5 22 L31 27 Q16 33 1 27Z" fill="#d4dade" stroke="#a0a8ae" stroke-width="0.7"/><path d="M2 24.5 Q16 29.5 30 24.5" stroke="#2a8ad8" stroke-width="1.4" fill="none"/><path d="M9 20 L23 6 L26.5 9.5 L12.5 23.5 L8 24.5Z" fill="#44b4f0" stroke="#1a78b8" stroke-width="0.7"/><path d="M8 24.5 L9 20 L12.5 23.5Z" fill="#303030"/><path d="M9 20 L10.8 18.2 L14.3 21.7 L12.5 23.5Z" fill="#e8c850"/><path d="M22 7 L25.5 10.5" stroke="#bfe6fa" stroke-width="1.5"/></svg>
<div class="a" style="left:263px;top:680px;width:48px;height:38px;background:#fff;"></div>
<div class="a" style="left:263px;top:680px;width:47px;height:1px;background:#404040;"></div>
<div class="a" style="left:263px;top:680px;width:1px;height:37px;background:#404040;"></div>
<div class="a" style="left:264px;top:681px;width:46px;height:1px;background:#808080;"></div>
<div class="a" style="left:264px;top:681px;width:1px;height:36px;background:#808080;"></div>
<svg class="a" style="left:271px;top:683px" width="30" height="32" viewBox="0 0 30 32"><rect x="0.5" y="0.5" width="25" height="20" rx="1" fill="#f6f7f8" stroke="#6a7684"/><rect x="1" y="1" width="24" height="2" fill="#aab4c2"/><rect x="21" y="1.5" width="1" height="1" fill="#fff"/><rect x="23" y="1.5" width="1" height="1" fill="#fff"/><rect x="1" y="4" width="24" height="1" fill="#c4ccd8"/><rect x="8" y="5" width="1" height="15" fill="#7a8694"/><rect x="2" y="7" width="4" height="1" fill="#666"/><rect x="3" y="9" width="2" height="1" fill="#666"/><rect x="3" y="11" width="3" height="1" fill="#666"/><rect x="3" y="13" width="2" height="1" fill="#666"/><path d="M2 15.5 Q2 14 4 14 H24 Q27 14 28.5 16.5 L29 19 V29 Q29 31 27 31 H4 Q2 31 2 29Z" fill="#c82222"/><path d="M2 15.5 Q2 14 4 14 H24 Q27 14 28.5 16.5 L29 19 H2Z" fill="#e04a40"/><path d="M2.5 16 H22" stroke="#f4a090" stroke-width="1"/><path d="M24 19 V31" stroke="#a01818" stroke-width="1"/><rect x="2" y="29" width="27" height="2" fill="#a81a1a"/><path d="M10.5 15 Q10.5 11 15.5 11 Q20.5 11 20.5 15" stroke="#1a1e28" stroke-width="1.8" fill="none"/><rect x="5" y="19" width="2" height="5" rx="0.5" fill="#d8d8d8" stroke="#777" stroke-width="0.4"/><rect x="15" y="20" width="2" height="5" rx="0.5" fill="#d8d8d8" stroke="#777" stroke-width="0.4"/></svg>
<div class="a" style="left:1100px;top:680px;width:177px;height:1px;background:#808080;"></div>
<div class="a" style="left:1100px;top:680px;width:1px;height:37px;background:#808080;"></div>
<div class="a" style="left:1100px;top:716px;width:178px;height:1px;background:#fff;"></div>
<div class="a" style="left:1277px;top:680px;width:1px;height:37px;background:#fff;"></div>
<svg class="a" style="left:1106px;top:693px" width="7" height="9"><path d="M0.5 4 L3.5 1 L6.5 4 M0.5 8 L3.5 5 L6.5 8" stroke="#000" stroke-width="1.5" fill="none"/></svg>
<svg class="a" style="left:1123px;top:693px" width="17" height="13"><path d="M0 12.5 L11 1 L8 12.5Z" fill="#ff0000"/><path d="M9 6 L11 5 L16 12.5 L10 12.5Z" fill="#00e000"/></svg>
<svg class="a" style="left:1153px;top:691px" width="17" height="17" viewBox="0 0 17 17"><rect x="0.8" y="0.8" width="2.4" height="15.4" rx="1" fill="#fafafa" stroke="#3a3a3a" stroke-width="0.9"/><path d="M3.2 1.5 H9 Q10 4 13 4 H16 Q15.5 8 13 9 Q10 9 9 8.5 H3.2 Z" fill="#f4f4f4" stroke="#3a3a3a" stroke-width="0.9"/><path d="M3.5 6 H9 Q11 7.5 14.5 7" stroke="#c8c8c8" fill="none"/></svg>
<svg class="a" style="left:1177px;top:691px" width="17" height="17" viewBox="0 0 17 17"><rect x="5.5" y="3.5" width="11" height="9" fill="#505050"/><rect x="6.5" y="4.5" width="9" height="7" fill="#a8a8a8"/><rect x="6.5" y="4.5" width="9" height="3" fill="#c8c8c8"/><rect x="8" y="13" width="7" height="1.5" fill="#404040"/><rect x="6" y="14.5" width="10" height="1.5" fill="#e8e8e8" stroke="#404040" stroke-width="0.6"/><path d="M1 0.5 V4 Q1 6 3 6 Q5 6 5 4 V0.5" stroke="#303030" stroke-width="2.4" fill="none"/><path d="M1 0.5 V4 Q1 6 3 6 Q5 6 5 4 V0.5" stroke="#ffffff" stroke-width="1" fill="none"/><rect x="2" y="6" width="2.4" height="10.5" fill="#303030"/><rect x="2.7" y="6" width="1" height="10" fill="#ffffff"/></svg>
<div class="t " style="left:1210px;top:685px;transform:scaleX(0.9275);transform-origin:0 0;">4:22 PM</div>
<div class="t " style="left:1204px;top:701px;transform:scaleX(1.0217);transform-origin:0 0;">6/14/2019</div>
<svg class="a" style="left:1260px;top:693px" width="16" height="13" viewBox="0 0 16 13" shape-rendering="crispEdges"><rect x="0" y="0" width="16" height="13" fill="#7a9ac0"/><rect x="1" y="1" width="14" height="8" fill="#3a72c8"/><rect x="7" y="1" width="8" height="5" fill="#5a98e0"/><rect x="1" y="9" width="14" height="3" fill="#1a2a48"/><rect x="2" y="9" width="2" height="2" fill="#f0a020"/><rect x="2" y="10" width="1" height="1" fill="#30a0f0"/></svg>
<svg class="a" style="left:4px;top:48px" width="18" height="17" viewBox="0 0 18 17"><path d="M1 8.5 L8.5 1 V5.5 H16.5 V11.5 H8.5 V16 Z" fill="#a8a8a8" stroke="#6c6c6c" stroke-linejoin="round"/><path d="M3 8.5 L7.5 4 V6.5 H15" stroke="#e8e8e8" fill="none"/></svg>
<svg class="a" style="left:27px;top:48px" width="18" height="17" viewBox="0 0 18 17"><path d="M17 8.5 L9.5 1 V5.5 H1.5 V11.5 H9.5 V16 Z" fill="#a8a8a8" stroke="#6c6c6c" stroke-linejoin="round"/><path d="M10.5 14 L15 8.5" stroke="#e8e8e8" fill="none"/></svg>
<svg class="a" style="left:59px;top:51px" width="16" height="13" viewBox="0 0 16 13" shape-rendering="crispEdges"><rect x="0" y="0" width="16" height="13" fill="#8a9098"/><rect x="1" y="1" width="14" height="11" fill="#f8f8f8"/><rect x="1" y="1" width="10" height="1" fill="#c8ccd4"/><rect x="12" y="1" width="1" height="1" fill="#555"/><rect x="14" y="1" width="1" height="1" fill="#555"/><rect x="1" y="2" width="14" height="1" fill="#8a9098"/><rect x="1" y="3" width="14" height="1" fill="#c8ccd4"/><rect x="1" y="4" width="14" height="1" fill="#8a9098"/><rect x="5" y="5" width="1" height="7" fill="#8a9098"/><rect x="2" y="6" width="2" height="1" fill="#3a70d0"/><rect x="2" y="8" width="2" height="1" fill="#3a70d0"/><rect x="2" y="10" width="2" height="1" fill="#3a70d0"/><path d="M7 8.5 L10 5 V12Z" fill="#40b020"/></svg>
<svg class="a" style="left:113px;top:51px" width="16" height="13" viewBox="0 0 16 13" shape-rendering="crispEdges"><rect x="0" y="0" width="16" height="13" fill="#8a9098"/><rect x="1" y="1" width="14" height="11" fill="#f8f8f8"/><rect x="1" y="1" width="10" height="1" fill="#c8ccd4"/><rect x="12" y="1" width="1" height="1" fill="#555"/><rect x="14" y="1" width="1" height="1" fill="#555"/><rect x="1" y="2" width="14" height="1" fill="#8a9098"/><rect x="1" y="3" width="14" height="1" fill="#c8ccd4"/><rect x="1" y="4" width="14" height="1" fill="#8a9098"/><rect x="10" y="5" width="1" height="7" fill="#8a9098"/><rect x="12" y="6" width="2" height="1" fill="#3a70d0"/><rect x="12" y="8" width="2" height="1" fill="#3a70d0"/><rect x="12" y="10" width="2" height="1" fill="#3a70d0"/><path d="M4 5 L7 8.5 L4 12Z" fill="#40b020"/></svg>
<svg class="a" style="left:91px;top:48px" width="14" height="16" viewBox="0 0 14 16"><rect x="0" y="0" width="13" height="16" fill="#2a4ab8"/><rect x="3" y="1" width="9" height="14" fill="#6a8ae8"/><path d="M5 5 Q5 2.5 7.5 2.5 Q10 2.5 10 5 Q10 6.5 8 7.5 V9.5" stroke="#fff" stroke-width="1.8" fill="none"/><rect x="7" y="11" width="2" height="2" fill="#fff"/></svg>
<svg class="a" style="left:145px;top:48px" width="14" height="17" viewBox="0 0 14 17"><path d="M0.5 0.5 H10 L12.5 3 V15.5 H0.5Z" fill="#fff" stroke="#000"/><rect x="10" y="1.5" width="1" height="1" fill="#000"/><path d="M3 8.5 V5.5 Q3 4.5 4 4.5 H7" stroke="#009000" stroke-width="1.4" fill="none" stroke-dasharray="1.6 0.6"/><path d="M6.5 2 L10 4.5 L6.5 7Z" fill="#009000"/><path d="M9.5 7.5 V10.5 Q9.5 11.5 8.5 11.5 H5.5" stroke="#009000" stroke-width="1.4" fill="none" stroke-dasharray="1.6 0.6"/><path d="M6 9 L2.5 11.5 L6 14Z" fill="#009000"/></svg>
<svg class="a" style="left:167px;top:49px" width="14" height="15" viewBox="0 0 14 15"><path d="M1 0.5 L3 0.5 L13 14 L11.5 14.5Z" fill="#000"/><path d="M13 0.8 L12 0.5 L0.5 13 L1.5 14.5 L3 13.5Z" fill="#000"/></svg>
<svg class="a" style="left:190px;top:48px" width="16" height="16" viewBox="0 0 16 16" shape-rendering="crispEdges"><rect x="0" y="4" width="12" height="12" fill="#000"/><rect x="1" y="5" width="1" height="1" fill="#fff"/><rect x="1" y="8" width="10" height="1" fill="#c8c8c8"/><rect x="1" y="11" width="10" height="1" fill="#fff"/><rect x="1" y="13" width="10" height="1" fill="#fff"/><path d="M3 8 L9 2 H14 V6 L9 9 Z" fill="#c0c0c0" stroke="#000" shape-rendering="auto"/><path d="M5 6.5 L8 3.5 M6.5 7.5 L9.5 4.5" stroke="#fff" shape-rendering="auto"/><rect x="14" y="1" width="1.5" height="6" fill="#1010c0"/></svg>
<svg class="a" style="left:213px;top:49px" width="16" height="14" viewBox="0 0 16 14"><path d="M0.5 3.5 H5 L6 4.5 H10 V13.5 H0.5Z" fill="#ffff80" stroke="#000"/><path d="M0.5 13.5 L4 7.5 H15.5 L12 13.5Z" fill="#a0a000" stroke="#000"/><path d="M8 3 Q11 0 14 3 M14 1 V3.5 H11.5" stroke="#000" fill="none"/></svg>
<svg class="a" style="left:236px;top:49px" width="16" height="16" viewBox="0 0 16 16"><rect x="0.5" y="0.5" width="13" height="12" fill="#c0c0c0" stroke="#808080"/><rect x="2" y="1" width="9" height="10" fill="#ffff80" opacity="0.8"/><circle cx="6.5" cy="6" r="3.5" fill="#80e0ff" stroke="#000"/><path d="M9 9 L14.5 14.5" stroke="#0000c0" stroke-width="1.8"/></svg>
<svg class="a" style="left:259px;top:48px" width="16" height="16" viewBox="0 0 16 16"><rect x="0.5" y="0.5" width="13" height="13" fill="#e8e8e8" stroke="#000"/><rect x="2" y="3" width="4" height="3" fill="#555"/><rect x="2" y="8" width="4" height="3" fill="#555"/><rect x="8" y="3" width="4" height="2" fill="#555"/><path d="M11 7 L12 9 L14.5 8.5 L13 10.5 L15 12 L12.5 12.5 L12 15 L10.5 13 L8 14 L9 11.5 L7 10 L9.5 9.5Z" fill="#ffff00" stroke="#606000" stroke-width="0.6"/></svg>
<div class="a" style="left:126px;top:329px;width:204px;height:228px;background:#d4d0c8;"></div>
<div class="a" style="left:126px;top:329px;width:203px;height:1px;background:#d4d0c8;"></div>
<div class="a" style="left:126px;top:329px;width:1px;height:227px;background:#d4d0c8;"></div>
<div class="a" style="left:127px;top:330px;width:201px;height:1px;background:#fff;"></div>
<div class="a" style="left:127px;top:330px;width:1px;height:225px;background:#fff;"></div>
<div class="a" style="left:127px;top:555px;width:202px;height:1px;background:#808080;"></div>
<div class="a" style="left:328px;top:330px;width:1px;height:226px;background:#808080;"></div>
<div class="a" style="left:126px;top:556px;width:204px;height:1px;background:#404040;"></div>
<div class="a" style="left:329px;top:329px;width:1px;height:228px;background:#404040;"></div>
<div class="t dis" style="left:145px;top:334px;">Open</div>
<div class="t dis" style="left:145px;top:351px;">Explore</div>
<div class="a" style="left:130px;top:369px;width:196px;height:1px;background:#808080;"></div>
<div class="a" style="left:130px;top:370px;width:196px;height:1px;background:#fff;"></div>
<div class="t dis" style="left:145px;top:377px;">Mark Partition as Active</div>
<div class="t " style="left:145px;top:394px;">Change Drive Letter and Paths...</div>
<div class="t dis" style="left:145px;top:411px;">Format...</div>
<div class="a" style="left:130px;top:429px;width:196px;height:1px;background:#808080;"></div>
<div class="a" style="left:130px;top:430px;width:196px;height:1px;background:#fff;"></div>
<div class="t dis" style="left:145px;top:437px;">Extend Volume...</div>
<div class="t " style="left:145px;top:454px;">Shrink Volume...</div>
<div class="t dis" style="left:145px;top:471px;">Add Mirror...</div>
<div class="t dis" style="left:145px;top:488px;">Delete Volume...</div>
<div class="a" style="left:130px;top:506px;width:196px;height:1px;background:#808080;"></div>
<div class="a" style="left:130px;top:507px;width:196px;height:1px;background:#fff;"></div>
<div class="t " style="left:145px;top:514px;">Properties</div>
<div class="a" style="left:130px;top:532px;width:196px;height:1px;background:#808080;"></div>
<div class="a" style="left:130px;top:533px;width:196px;height:1px;background:#fff;"></div>
<div class="t " style="left:145px;top:540px;">Help</div>
<div class="a" style="left:140px;top:433px;width:102px;height:20px;background:transparent;border:1px solid #ee1c24"></div>
<div class="a" style="left:755px;top:328px;width:204px;height:228px;background:#d4d0c8;"></div>
<div class="a" style="left:755px;top:328px;width:203px;height:1px;background:#d4d0c8;"></div>
<div class="a" style="left:755px;top:328px;width:1px;height:227px;background:#d4d0c8;"></div>
<div class="a" style="left:756px;top:329px;width:201px;height:1px;background:#fff;"></div>
<div class="a" style="left:756px;top:329px;width:1px;height:225px;background:#fff;"></div>
<div class="a" style="left:756px;top:554px;width:202px;height:1px;background:#808080;"></div>
<div class="a" style="left:957px;top:329px;width:1px;height:226px;background:#808080;"></div>
<div class="a" style="left:755px;top:555px;width:204px;height:1px;background:#404040;"></div>
<div class="a" style="left:958px;top:328px;width:1px;height:228px;background:#404040;"></div>
<div class="t " style="left:774px;top:333px;">Open</div>
<div class="t " style="left:774px;top:350px;">Explore</div>
<div class="a" style="left:759px;top:368px;width:196px;height:1px;background:#808080;"></div>
<div class="a" style="left:759px;top:369px;width:196px;height:1px;background:#fff;"></div>
<div class="t " style="left:774px;top:376px;">Mark Partition as Active</div>
<div class="t " style="left:774px;top:393px;">Change Drive Letter and Paths...</div>
<div class="t " style="left:774px;top:410px;">Format...</div>
<div class="a" style="left:759px;top:428px;width:196px;height:1px;background:#808080;"></div>
<div class="a" style="left:759px;top:429px;width:196px;height:1px;background:#fff;"></div>
<div class="t dis" style="left:774px;top:436px;">Extend Volume...</div>
<div class="t " style="left:774px;top:453px;">Shrink Volume...</div>
<div class="t dis" style="left:774px;top:470px;">Add Mirror...</div>
<div class="t " style="left:774px;top:487px;">Delete Volume...</div>
<div class="a" style="left:759px;top:505px;width:196px;height:1px;background:#808080;"></div>
<div class="a" style="left:759px;top:506px;width:196px;height:1px;background:#fff;"></div>
<div class="t " style="left:774px;top:513px;">Properties</div>
<div class="a" style="left:759px;top:531px;width:196px;height:1px;background:#808080;"></div>
<div class="a" style="left:759px;top:532px;width:196px;height:1px;background:#fff;"></div>
<div class="t " style="left:774px;top:539px;">Help</div>
<div class="a" style="left:769px;top:433px;width:110px;height:18px;background:transparent;border:1px solid #ee1c24"></div>
</body></html>
